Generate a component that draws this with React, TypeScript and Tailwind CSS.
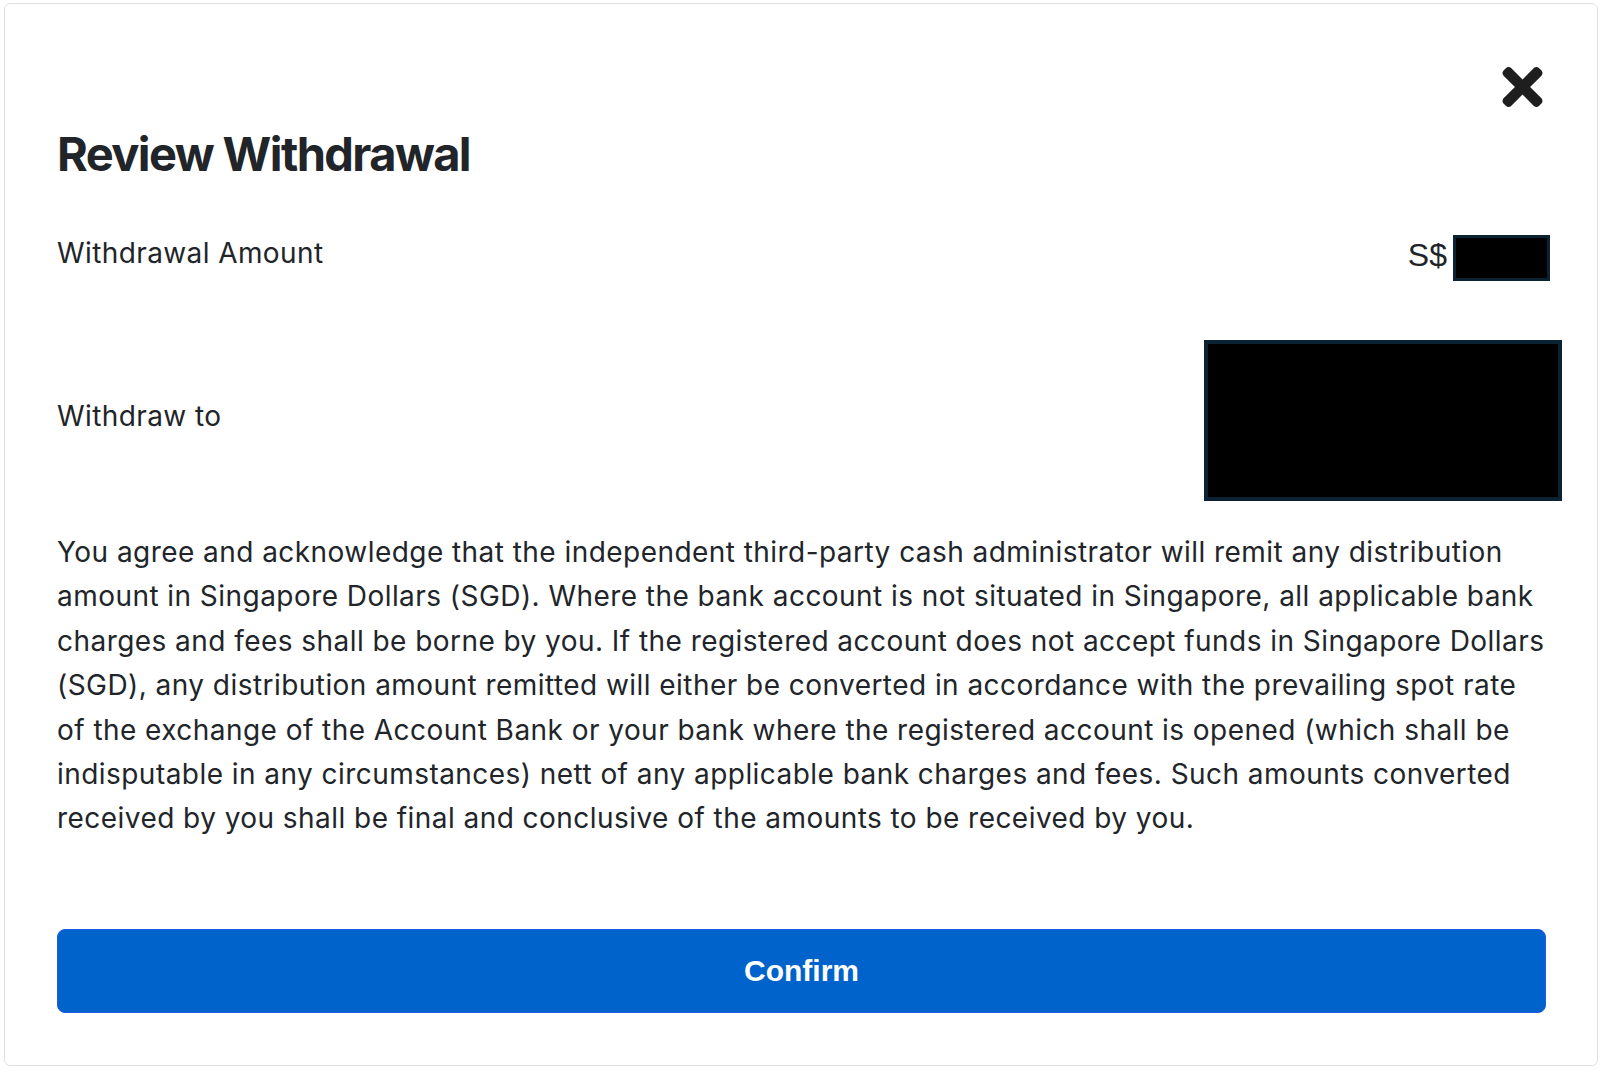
const CloseIcon = () => (
  <svg viewBox="0 80 352 352" className="w-[41px] h-[40px] text-[#1e1e1e]" fill="currentColor">
    <path d="M242.72 256l100.07-100.07c12.28-12.28 12.28-32.19 0-44.48l-22.24-22.24c-12.28-12.28-32.19-12.28-44.48 0L176 189.28 75.93 89.21c-12.28-12.28-32.19-12.28-44.48 0L9.21 111.45c-12.28 12.28-12.28 32.19 0 44.48L109.28 256 9.21 356.07c-12.28 12.28-12.28 32.19 0 44.48l22.24 22.24c12.28 12.28 32.2 12.28 44.48 0L176 322.72l100.07 100.07c12.28 12.28 32.2 12.28 44.48 0l22.24-22.24c12.28-12.28 12.28-32.19 0-44.48L242.72 256z" />
  </svg>
);

const App = () => {
  return (
    <div className="w-[1600px] h-[1073px] bg-white pt-[3px] pl-[4px] font-['Inter',sans-serif] text-[#212529]">
      <div className="w-[1594px] h-[1063px] border border-[#dee2e6] rounded-[6px] pt-[63px] pl-[52px] pr-[51px] flex flex-col">
        {/* close */}
        <div className="flex justify-end pr-[3px]">
          <button className="cursor-pointer">
            <CloseIcon />
          </button>
        </div>

        <h2 className="mt-[18px] text-[47px] leading-[58px] font-bold tracking-[-1.6px]">
          Review Withdrawal
        </h2>

        {/* amount */}
        <div className="mt-[48px] flex justify-between items-start tracking-[0.4px]">
          <span className="text-[28px] leading-[44.5px]">Withdrawal Amount</span>
          <div className="mt-[4px] mr-[-4px] flex items-center gap-[6px]">
            <span className="font-['Liberation_Sans',sans-serif] text-[32px] leading-none tracking-normal -mt-[6px]">S$</span>
            <div className="w-[97px] h-[46px] bg-black border-[3px] border-[#0b2232]" />
          </div>
        </div>

        {/* withdraw to */}
        <div className="mt-[59px] flex justify-between items-start tracking-[0.4px]">
          <span className="mt-[54px] text-[28px] leading-[44.5px]">Withdraw to</span>
          <div className="mr-[-16px] w-[358px] h-[161px] bg-black border-[4px] border-[#0b2232]" />
        </div>

        <p className="mt-[29px] text-[28px] leading-[44.4px] tracking-[0.45px]">
          You agree and acknowledge that the independent third-party cash administrator will remit any distribution
          amount in Singapore Dollars (SGD). Where the bank account is not situated in Singapore, all applicable bank
          charges and fees shall be borne by you. If the registered account does not accept funds in Singapore Dollars
          (SGD), any distribution amount remitted will either be converted in accordance with the prevailing spot rate
          of the exchange of the Account Bank or your bank where the registered account is opened (which shall be
          indisputable in any circumstances) nett of any applicable bank charges and fees. Such amounts converted
          received by you shall be final and conclusive of the amounts to be received by you.
        </p>

        <button className="mt-[88px] h-[84px] w-full rounded-[8px] bg-[#0063cc] border border-[#1f5be3] text-white font-['Liberation_Sans',sans-serif] font-bold text-[30px]">
          Confirm
        </button>
      </div>
    </div>
  );
};

export default App;
